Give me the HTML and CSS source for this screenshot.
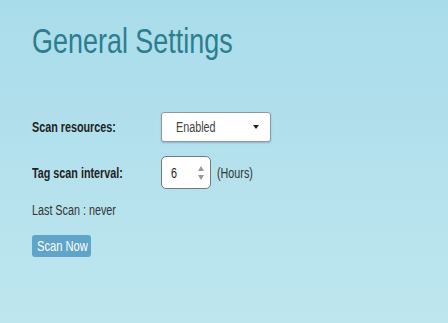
FILE: index.html
```html
<!DOCTYPE html>
<html lang="en">
<head>
    <meta charset="UTF-8">
    <meta name="viewport" content="width=device-width, initial-scale=1.0">
    <title>General Settings</title>
    <link rel="stylesheet" href="styles.css">
</head>
<body>
    <div class="page">
        <h1 class="title"><span class="sq">General Settings</span></h1>

        <div class="settings">
            <div class="row">
                <label class="label" for="scanResources"><span class="sq">Scan resources:</span></label>
                <div class="select-box" id="scanResources">
                    <span class="select-value"><span class="sq">Enabled</span></span>
                    <span class="caret"></span>
                </div>
            </div>

            <div class="row">
                <label class="label" for="interval"><span class="sq">Tag scan interval:</span></label>
                <div class="number-box" id="interval">
                    <span class="number-value"><span class="sq">6</span></span>
                    <span class="spin">
                        <span class="spin-up"></span>
                        <span class="spin-down"></span>
                    </span>
                </div>
                <span class="unit"><span class="sq">(Hours)</span></span>
            </div>
        </div>

        <p class="last-scan"><span class="sq">Last Scan : never</span></p>

        <button class="scan-button"><span class="sq">Scan Now</span></button>
    </div>
</body>
</html>
```

FILE: styles.css
```css
html, body {
    height: 100%;
}
body {
    margin: 0;
    font-family: "Liberation Sans", Arial, sans-serif;
    background: linear-gradient(to bottom, #a9dcea, #bee6ef);
    color: #333;
}
/* the text in this theme is set in a narrow face */
.sq {
    display: inline-block;
    white-space: nowrap;
    transform: scaleX(0.77);
    transform-origin: left center;
}
.page {
    padding: 21px 32px;
}
.title {
    margin: 0;
    font-size: 35px;
    font-weight: normal;
    color: #2d7d8e;
    line-height: 40px;
}
.settings {
    margin-top: 49px;
}
.row {
    display: flex;
    align-items: center;
    height: 33px;
    margin-bottom: 13px;
}
.label {
    width: 129px;
    font-size: 14px;
    font-weight: bold;
    color: #222;
}
.select-box {
    box-sizing: border-box;
    width: 110px;
    height: 30px;
    display: flex;
    align-items: center;
    justify-content: space-between;
    padding: 0 11px 0 14px;
    background: #fff;
    border: 1px solid #8a9aa3;
    border-radius: 3px;
    box-shadow: 0 1px 2px rgba(0, 0, 0, 0.2);
    font-size: 14px;
    color: #444;
}
.select-value {
    width: 40px;
}
.caret {
    width: 0;
    height: 0;
    border-left: 3px solid transparent;
    border-right: 3px solid transparent;
    border-top: 4px solid #222;
}
.number-box {
    box-sizing: border-box;
    width: 50px;
    height: 33px;
    display: flex;
    align-items: center;
    justify-content: space-between;
    padding: 0 6px 0 9px;
    background: #fff;
    border: 1px solid #707a80;
    border-radius: 5px;
    font-size: 14px;
    color: #222;
}
.spin {
    display: flex;
    flex-direction: column;
    gap: 4px;
}
.spin-up {
    width: 0;
    height: 0;
    border-left: 3px solid transparent;
    border-right: 3px solid transparent;
    border-bottom: 5px solid #999;
}
.spin-down {
    width: 0;
    height: 0;
    border-left: 3px solid transparent;
    border-right: 3px solid transparent;
    border-top: 5px solid #999;
}
.unit {
    margin-left: 6px;
    font-size: 14px;
    color: #333;
}
.last-scan {
    margin: 10px 0 0;
    font-size: 14px;
    color: #333;
}
.scan-button {
    display: block;
    box-sizing: border-box;
    margin-top: 17px;
    width: 59px;
    height: 22px;
    padding: 0 0 0 5px;
    text-align: left;
    background: #5fa4c9;
    color: #fff;
    border: none;
    border-radius: 3px;
    font-family: inherit;
    font-size: 14.5px;
}
```
